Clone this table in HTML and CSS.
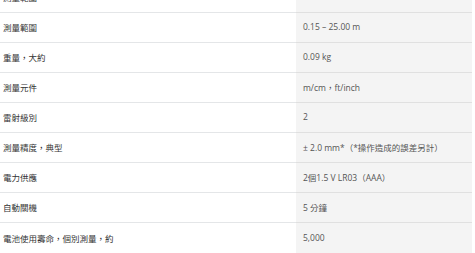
FILE: index.html
```html
<!DOCTYPE html>
<html lang="zh-Hant">
<head>
<meta charset="utf-8">
<link rel="stylesheet" href="styles.css">
</head>
<body>
<div class="specs">
  <div class="row"><div class="label">測量範圍</div><div class="value"></div></div>
  <div class="row"><div class="label">測量範圍</div><div class="value">0.15 – 25.00 m</div></div>
  <div class="row"><div class="label">重量，大約</div><div class="value">0.09 kg</div></div>
  <div class="row"><div class="label">測量元件</div><div class="value">m/cm，ft/inch</div></div>
  <div class="row"><div class="label">雷射級別</div><div class="value">2</div></div>
  <div class="row"><div class="label">測量精度，典型</div><div class="value">± 2.0 mm*（*操作造成的誤差另計）</div></div>
  <div class="row"><div class="label">電力供應</div><div class="value">2個1.5 V LR03（AAA）</div></div>
  <div class="row"><div class="label">自動關機</div><div class="value">5 分鐘</div></div>
  <div class="row last"><div class="label">電池使用壽命，個別測量，約</div><div class="value">5,000</div></div>
</div>
</body>
</html>
```

FILE: styles.css
```css
html, body {
  margin: 0;
  padding: 0;
  background: #ffffff;
}
body {
  font-family: "Open Sans", "Noto Sans CJK TC", sans-serif;
  font-size: 8.5px;
}
.specs {
  width: 472px;
  margin-top: -17px;
}
.row {
  display: grid;
  grid-template-columns: 296px 176px;
  height: 30px;
}
.label, .value {
  display: flex;
  align-items: center;
  padding-bottom: 2px;
  border-bottom: 1px solid #e4e6e8;
  box-sizing: border-box;
}
.label {
  padding-left: 3px;
  color: #333;
}
.value {
  padding-left: 7px;
  background: #f4f4f4;
  color: #555;
  border-bottom-color: #e0e0e0;
}
.row.last .label, .row.last .value {
  border-bottom: none;
}
.row.last { height: 31px; }
```
